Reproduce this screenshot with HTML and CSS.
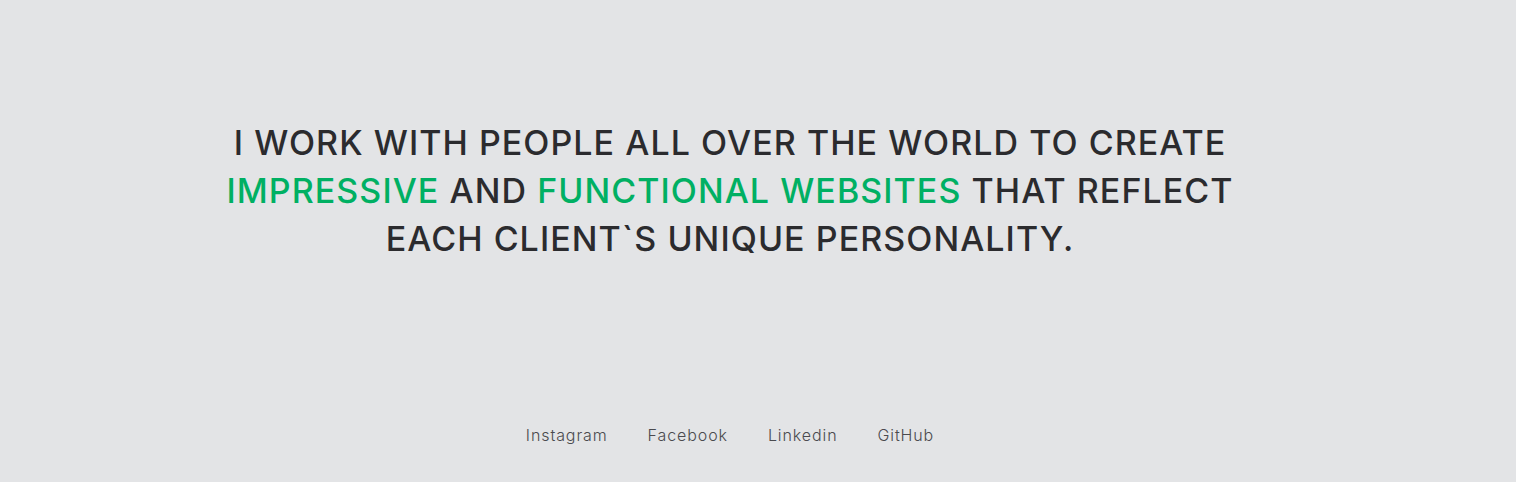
FILE: index.html
```html
<!DOCTYPE html>
<html lang="en">
<head>
<meta charset="utf-8">
<title>About</title>
<link rel="stylesheet" href="styles.css">
</head>
<body>
<main class="page">
  <section class="intro">
    <h1 class="statement">I WORK WITH PEOPLE ALL OVER THE WORLD TO CREATE<br><span class="accent">IMPRESSIVE</span> AND <span class="accent">FUNCTIONAL WEBSITES</span> THAT REFLECT<br>EACH CLIENT`S UNIQUE PERSONALITY.</h1>
  </section>
  <footer class="social">
    <a class="social-link" href="#">Instagram</a>
    <a class="social-link" href="#">Facebook</a>
    <a class="social-link" href="#">Linkedin</a>
    <a class="social-link" href="#">GitHub</a>
  </footer>
</main>
</body>
</html>
```
FILE: styles.css
```css
html, body {
  margin: 0;
  padding: 0;
  background: #e3e4e6;
}
body {
  font-family: "Inter", "Open Sans", sans-serif;
  color: #2b2b2e;
}
.page {
  width: 1460px;
  height: 482px;
  display: flex;
  flex-direction: column;
  align-items: center;
}
.intro {
  padding-top: 119px;
}
.statement {
  margin: 0;
  font-size: 34px;
  font-weight: 500;
  line-height: 48px;
  letter-spacing: 1.05px;
  text-align: center;
  color: #2b2b2e;
}
.accent {
  color: #00b063;
}
.social {
  margin-top: auto;
  margin-bottom: 37px;
  display: flex;
  gap: 40px;
}
.social-link {
  font-size: 16px;
  font-weight: 300;
  letter-spacing: 0.9px;
  color: #4a4a4e;
  text-decoration: none;
}
```
